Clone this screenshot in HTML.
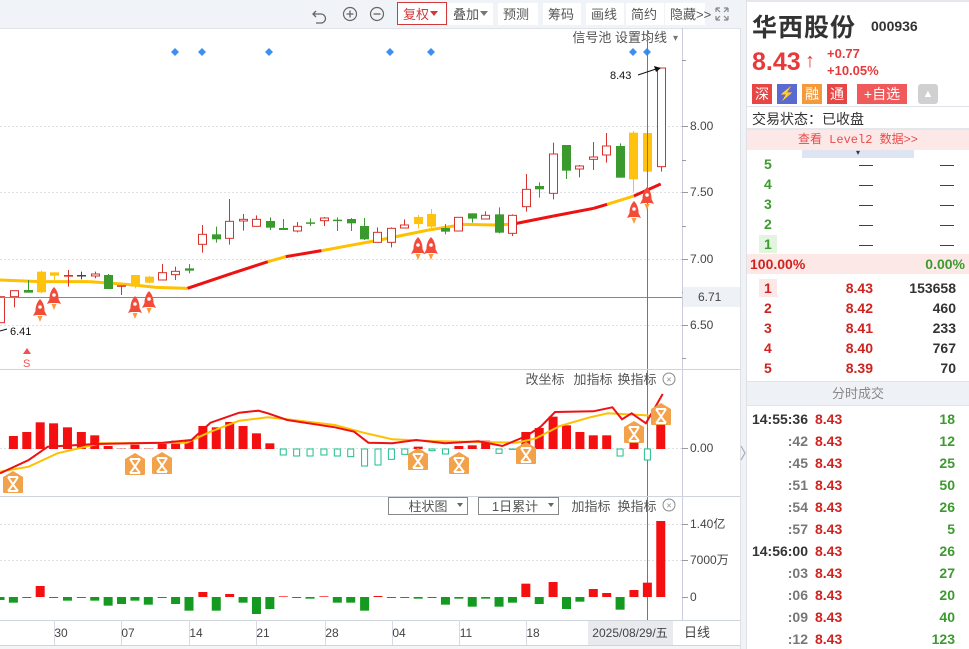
<!DOCTYPE html>
<html><head><meta charset="utf-8">
<style>
*{margin:0;padding:0;box-sizing:border-box}
body{width:969px;height:649px;overflow:hidden;background:#fff;font-family:"Liberation Sans","Noto Sans CJK SC",sans-serif;position:relative}
#chart{position:absolute;left:0;top:0}
#rp{position:absolute;left:747px;top:0;width:222px;height:649px;background:#fff;font-size:14px}
.abs{position:absolute}
.b{font-weight:bold}
.red{color:#e8393a}
.dred{color:#d0231f}
.grn{color:#3d9a2f}
.row{position:absolute;left:0;width:222px;height:20px;line-height:20px;font-weight:bold;font-size:14px}
</style></head><body>
<svg id="chart" width="747" height="649" xmlns="http://www.w3.org/2000/svg" font-family="Liberation Sans, Noto Sans CJK SC, sans-serif"></svg>

<div id="rp">
  <div class="abs" style="left:0;top:0;width:222px;height:2px;background:#e4e7ec"></div>
  <div class="abs b" style="left:5px;top:8px;font-size:25px;color:#333;letter-spacing:1px">华西股份</div>
  <div class="abs b" style="left:124px;top:18px;font-size:14px;color:#333">000936</div>
  <div class="abs b red" style="left:5px;top:48px;font-size:25px">8.43</div>
  <div class="abs b red" style="left:58px;top:50px;font-size:20px">↑</div>
  <div class="abs b red" style="left:80px;top:46px;font-size:13px">+0.77</div>
  <div class="abs b red" style="left:80px;top:63px;font-size:13px">+10.05%</div>
  <div class="abs" style="left:5px;top:84px;width:20px;height:20px;background:#e84545;color:#fff;font-size:14px;text-align:center;line-height:20px">深</div>
  <div class="abs" style="left:30px;top:84px;width:20px;height:20px;background:#5a6ad0;color:#fff;font-size:13px;text-align:center;line-height:20px">⚡</div>
  <div class="abs" style="left:55px;top:84px;width:20px;height:20px;background:#f59a3a;color:#fff;font-size:14px;text-align:center;line-height:20px">融</div>
  <div class="abs" style="left:80px;top:84px;width:20px;height:20px;background:#e84545;color:#fff;font-size:14px;text-align:center;line-height:20px">通</div>
  <div class="abs" style="left:110px;top:84px;width:50px;height:20px;background:#f15a5a;color:#fff;font-size:14px;text-align:center;line-height:20px">+自选</div>
  <div class="abs" style="left:171px;top:84px;width:20px;height:20px;background:#d0d0d0;border-radius:3px;color:#fff;font-size:11px;text-align:center;line-height:20px">▲</div>
  <div class="abs" style="left:0;top:106px;width:222px;height:1px;background:#dfe3e8"></div>
  <div class="abs" style="left:5px;top:109px;font-size:14px;color:#333">交易状态：已收盘</div>
  <div class="abs" style="left:0;top:128px;width:222px;height:2px;background:#e4e7ec"></div>
  <div class="abs" style="left:0;top:130px;width:222px;height:20px;background:#fde8e8;color:#e84a4a;font-size:12px;text-align:center;line-height:20px;font-family:'Liberation Mono','Noto Sans CJK SC',monospace">查看 Level2 数据&gt;&gt;</div>
  <div class="abs" style="left:55px;top:150px;width:112px;height:8px;background:#dde5f2;text-align:center;font-size:8px;line-height:6px;color:#333">▾</div>
  <div class="row grn" style="top:154px"><span class="abs" style="left:17px">5</span><span class="abs" style="left:112px;color:#333;font-weight:normal">—</span><span class="abs" style="left:193px;color:#333;font-weight:normal">—</span></div>
  <div class="row grn" style="top:174px"><span class="abs" style="left:17px">4</span><span class="abs" style="left:112px;color:#333;font-weight:normal">—</span><span class="abs" style="left:193px;color:#333;font-weight:normal">—</span></div>
  <div class="row grn" style="top:194px"><span class="abs" style="left:17px">3</span><span class="abs" style="left:112px;color:#333;font-weight:normal">—</span><span class="abs" style="left:193px;color:#333;font-weight:normal">—</span></div>
  <div class="row grn" style="top:214px"><span class="abs" style="left:17px">2</span><span class="abs" style="left:112px;color:#333;font-weight:normal">—</span><span class="abs" style="left:193px;color:#333;font-weight:normal">—</span></div>
  <div class="row grn" style="top:234px"><span class="abs" style="left:12px;top:1px;width:18px;height:18px;background:#e3f5e0"></span><span class="abs" style="left:17px">1</span><span class="abs" style="left:112px;color:#333;font-weight:normal">—</span><span class="abs" style="left:193px;color:#333;font-weight:normal">—</span></div>
  <div class="row" style="top:254px;background:#fde8e8;height:20px"><span class="abs dred" style="left:3px">100.00%</span><span class="abs grn" style="right:4px">0.00%</span></div>
  <div class="row dred" style="top:278px"><span class="abs" style="left:12px;top:1px;width:18px;height:18px;background:#fde8e8"></span><span class="abs" style="left:17px">1</span><span class="abs" style="right:96px">8.43</span><span class="abs" style="right:13px;color:#333">153658</span></div>
  <div class="row dred" style="top:298px"><span class="abs" style="left:17px">2</span><span class="abs" style="right:96px">8.42</span><span class="abs" style="right:13px;color:#333">460</span></div>
  <div class="row dred" style="top:318px"><span class="abs" style="left:17px">3</span><span class="abs" style="right:96px">8.41</span><span class="abs" style="right:13px;color:#333">233</span></div>
  <div class="row dred" style="top:338px"><span class="abs" style="left:17px">4</span><span class="abs" style="right:96px">8.40</span><span class="abs" style="right:13px;color:#333">767</span></div>
  <div class="row dred" style="top:358px"><span class="abs" style="left:17px">5</span><span class="abs" style="right:96px">8.39</span><span class="abs" style="right:13px;color:#333">70</span></div>
  <div class="abs" style="left:0;top:381px;width:222px;height:25px;background:#eef2f7;border-top:1px solid #e0e4ea;border-bottom:1px solid #e0e4ea;color:#888;font-size:13px;text-align:center;line-height:23px">分时成交</div>
  <div id="ticks"></div>
</div>

<script>
(function(){
var t=[["14:55:36","18"],[":42","12"],[":45","25"],[":51","50"],[":54","26"],[":57","5"],["14:56:00","26"],[":03","27"],[":06","20"],[":09","40"],[":12","123"]];
var h="";
t.forEach(function(r,i){var y=409+i*22;
h+='<div class="row" style="top:'+y+'px"><span class="abs" style="right:161px;color:'+(r[0].length>4?'#333':'#777')+'">'+r[0]+'</span><span class="abs dred" style="left:68px">8.43</span><span class="abs grn" style="right:14px">'+r[1]+'</span></div>';});
document.getElementById('ticks').innerHTML=h;

var s="";
function L(x1,y1,x2,y2,c,w,d){s+='<line x1="'+x1+'" y1="'+y1+'" x2="'+x2+'" y2="'+y2+'" stroke="'+c+'" stroke-width="'+(w||1)+'"'+(d?' stroke-dasharray="'+d+'"':'')+'/>';}
function R(x,y,w,h,f,st){s+='<rect x="'+x+'" y="'+y+'" width="'+w+'" height="'+h+'" fill="'+f+'"'+(st?' stroke="'+st+'"':'')+'/>';}
function T(x,y,tx,c,sz,anc,extra){s+='<text x="'+x+'" y="'+y+'" fill="'+(c||'#333')+'" font-size="'+(sz||12)+'"'+(anc?' text-anchor="'+anc+'"':'')+(extra||'')+'>'+tx+'</text>';}
R(0,0,745,28,"#f0f3f8");
L(0,28.5,745,28.5,"#e0e4ea");
s+='<path d="M316 11 l-3 3 l3 3 M313 14 h8 a4.5 4.5 0 0 1 0 9 h-5" fill="none" stroke="#666" stroke-width="1.3"/>';
s+='<circle cx="350" cy="14" r="6.5" fill="none" stroke="#666" stroke-width="1.2"/><path d="M346.5 14h7M350 10.5v7" stroke="#666" stroke-width="1.3"/>';
s+='<circle cx="377" cy="14" r="6.5" fill="none" stroke="#666" stroke-width="1.2"/><path d="M373.5 14h7" stroke="#666" stroke-width="1.3"/>';
R(397.5,2.5,49,22,"#fff","#d23a3a");T(403,19,"复权","#d23a3a",13);s+='<path d="M430 11h8l-4 5z" fill="#d23a3a"/>';
var bt=[[448,45,"叠加",1],[498,40,"预测"],[543,38,"筹码"],[586,38,"画线"],[626,38,"简约"],[665,40,"隐藏>>"]];
bt.forEach(function(b){R(b[0],3,b[1],22,"#fff");T(b[0]+5,19,b[2],"#555",13);if(b[3])s+='<path d="M480 11h8l-4 5z" fill="#777"/>';});
s+='<path d="M716 8h4M716 8v4M716 8l4 4M728 8h-4M728 8v4M728 8l-4 4M716 20h4M716 20v-4M716 20l4-4M728 20h-4M728 20v-4M728 20l-4-4" stroke="#888" stroke-width="1.2" fill="none"/>';
R(740,0,7,649,"#f0f2f5");L(740.5,28,740.5,649,"#dde1e6");L(746.5,0,746.5,649,"#dde1e6");
s+='<path d="M741 446l4 7-4 7" fill="none" stroke="#aab" stroke-width="1.2"/>';
L(682.5,28,682.5,620,"#ccd");
[126,192,259,325].forEach(function(y){L(0,y+0.5,682,y+0.5,"#dde0e6",1,"2,2");L(682,y+0.5,688,y+0.5,"#999");});
[60,160,226,292,358].forEach(function(y){L(682,y+0.5,686,y+0.5,"#999");});
T(690,130,"8.00","#444",12);T(690,196,"7.50","#444",12);T(690,263,"7.00","#444",12);T(690,329,"6.50","#444",12);
T(678,41,"▾","#777",10,"end");T(667,42,"信号池  设置均线","#555",13,"end");
[175,202,269,390,431,633,647].forEach(function(x){s+='<path d="M'+x+' 48l4 4-4 4-4-4z" fill="#3d8ff0"/>';});
var ma=[[0,540],[90,545],[200,545],[300,555],[350,562],[420,565],[520,520],[600,485],[640,470],[720,452],[850,420],[960,390],[1040,373],[1110,375],[1150,372],[1240,348],[1330,325],[1360,313],[1420,288],[1480,252]];
function mp(p){return [p[0]/2.24,100+p[1]/3];}
var cols=["#ffc000","#ffc000","#ffc000","#ffc000","#ffc000","#ee1111","#ee1111","#ffc000","#ee1111","#ffc000","#ffc000","#ffc000","#ffc000","#ffc000","#ee1111","#ee1111","#ee1111","#ffc000","#ee1111"];
for(var i=0;i<ma.length-1;i++){var a=mp(ma[i]),b=mp(ma[i+1]);L(a[0],a[1],b[0],b[1],cols[i],3);}
var C=[[0,590,668,590,668,'r'],[32,572,590,572,622,'r'],[62,570,578,540,578,'g'],[92,515,577,512,580,'y'],[122,517,527,517,540,'y'],[153,525,530,510,560,'R'],[181,525,528,515,538,'k'],[213,522,528,515,535,'r'],[243,525,567,522,567,'g'],[270,556,560,556,585,'R'],[302,525,560,525,565,'y'],[333,530,548,528,550,'y'],[363,518,540,492,540,'r'],[392,514,524,500,540,'r'],[423,505,512,492,520,'g'],[453,403,433,375,458,'r'],[484,403,418,380,428,'g'],[514,364,415,297,434,'r'],[545,358,363,342,392,'r'],[574,358,379,346,380,'r'],[605,363,383,352,390,'g'],[634,384,390,357,390,'g'],[665,379,393,366,397,'r'],[695,367,370,355,378,'g'],[726,354,362,351,378,'r'],[755,359,362,352,393,'g'],[786,357,370,354,393,'g'],[816,378,418,354,420,'g'],[845,397,427,382,427,'r'],[876,385,427,382,442,'r'],[906,375,384,358,385,'r'],[937,351,372,345,385,'y'],[966,342,380,327,385,'y'],[997,384,395,372,403,'g'],[1026,352,393,352,393,'r'],[1057,340,356,340,368,'g'],[1087,346,357,334,358,'r'],[1118,343,398,322,400,'g'],[1147,346,400,343,408,'r'],[1179,268,320,222,335,'r'],[1208,258,268,247,293,'g'],[1239,162,280,128,298,'r'],[1268,135,212,135,237,'g'],[1298,198,207,195,232,'r'],[1328,171,178,126,210,'r'],[1358,138,165,99,188,'r'],[1389,138,233,130,233,'g'],[1418,98,238,93,275,'y'],[1450,99,215,95,237,'y'],[1480,-96,200,-96,215,'r']];
var CC={r:"#d8322c",R:"#d8322c",g:"#3a9a2e",y:"#ffc20e",k:"#444"};
C.forEach(function(c){var x=Math.round(c[0]/2.24)+0.5,y1=100+c[1]/3,y2=100+c[2]/3,w1=100+c[3]/3,w2=100+c[4]/3,col=CC[c[5]];
L(x,w1,x,w2,col,1);var h=Math.max(1.5,y2-y1);
if(c[5]=='r')R(x-4,y1,8,h,"#fff",col);else R(x-4.5,y1,9,h,col);});
L(0,297.5,682,297.5,"#888");R(683,287,57,20,"#eef1f5");T(698,301,"6.71","#444",12);
L(647.5,30,647.5,620,"#777");
T(610,79,"8.43","#111",11);s+='<path d="M638 75 L656 69" stroke="#111"/><path d="M661 68l-7-2 2 6z" fill="#111"/>';
T(10,335,"6.41","#111",11);L(0,331,7,329,"#111");
s+='<path d="M27 348l4 6h-8z" fill="#f05050"/>';T(23,367,"S","#f05050",11);
function rocket(x,y){s+='<g transform="translate('+x+','+y+')"><path d="M0 -11 C5 -6 5 1 4 5 L-4 5 C-5 1 -5 -6 0 -11Z" fill="#f24b3a"/><path d="M-4 0 L-7 6 L-4 5Z M4 0 L7 6 L4 5Z" fill="#f24b3a"/><circle cx="0" cy="-3" r="1.8" fill="#fff"/><path d="M-2.5 6 L0 12 L2.5 6Z" fill="#ff9a3a"/></g>';}
[[40,310],[54,298],[135,307],[149,302],[418,248],[431,248],[634,212],[647,198]].forEach(function(p){rocket(p[0],p[1]);});
L(0,369.5,740,369.5,"#cfd4db");
T(545,384,"改坐标","#555",13,"middle");T(593,384,"加指标","#555",13,"middle");T(637,384,"换指标","#555",13,"middle");
s+='<circle cx="669" cy="379" r="6" fill="none" stroke="#888"/><text x="669" y="382.5" font-size="9" fill="#888" text-anchor="middle">×</text>';
L(0,448.5,682,448.5,"#dde0e6",1,"2,2");L(682,448.5,688,448.5,"#999");T(690,452,"0.00","#444",12);
var M=[[28,198],[56,186],[84,157],[112,160],[141,172],[170,186],[198,196],[226,228],[254,236],[282,224],[310,236],[339,218],[367,212],[395,210],[424,168],[452,172],[480,156],[508,168],[536,190],[564,220],[592,255,1],[620,258,1],[648,258,1],[677,255,1],[705,258,1],[733,260,1],[762,288,1],[790,285,1],[818,268,1],[846,253,1],[874,230],[903,242,1],[931,252,1],[959,228],[987,226],[1015,212],[1043,250,1],[1071,238,1],[1099,186],[1127,174],[1156,140],[1184,166],[1212,186],[1240,196],[1268,196],[1296,258,1],[1325,200],[1353,270,1],[1381,150]];
M.forEach(function(m){var x=m[0]/2.09,y=370+m[1]/3,z=449;
if(m[2])R(x-3,z,6,y-z,"#fff","#1cc08a");else R(x-4.5,y,9,z-y,"#f41010");});
function poly(pts,c){var d=pts.map(function(p,i){return (i?'L':'M')+(p[0]/2.09).toFixed(1)+' '+(370+p[1]/3).toFixed(1);}).join(' ');s+='<path d="'+d+'" fill="none" stroke="'+c+'" stroke-width="2"/>';}
poly([[0,305],[60,290],[120,250],[210,220],[390,218],[440,185],[500,152],[560,142],[600,148],[700,165],[760,188],[820,208],[900,213],[1000,216],[1080,218],[1120,205],[1170,168],[1230,143],[1270,130],[1340,135],[1385,140]],"#ffc000");
poly([[0,310],[60,270],[100,230],[200,222],[340,218],[400,210],[440,158],[500,128],[540,122],[560,130],[600,150],[700,172],[740,185],[770,218],[820,220],[870,210],[930,220],[1000,214],[1050,228],[1100,198],[1130,170],[1160,126],[1240,124],[1280,112],[1300,148],[1320,130],[1350,160],[1385,72]],"#ee1111");
function xm(x,y){s+='<g transform="translate('+x+','+y+')"><path d="M-10 -5 L0 -11 L10 -5 L10 10 Q10 11 9 11 L-9 11 Q-10 11 -10 10Z" fill="#f2a24a"/><path d="M-5 -5 Q0 3 5 9 M5 -5 Q0 3 -5 9 M-5 -5h10 M-5 9h10" stroke="#fff" stroke-width="2" fill="none"/></g>';}
[[13,482],[135,464],[162,463],[418,459],[459,463],[526,453],[634,432],[661,414]].forEach(function(p){xm(p[0],p[1]);});
L(0,496.5,740,496.5,"#cfd4db");
R(388.5,497.5,79,17,"#fff","#888");T(428,511,"柱状图","#555",13,"middle");s+='<path d="M457 503h6l-3 4z" fill="#666"/>';
R(478.5,497.5,80,17,"#fff","#888");T(515,511,"1日累计","#555",13,"middle");s+='<path d="M548 503h6l-3 4z" fill="#666"/>';
T(591,511,"加指标","#555",13,"middle");T(637,511,"换指标","#555",13,"middle");
s+='<circle cx="669" cy="505" r="6" fill="none" stroke="#888"/><text x="669" y="508.5" font-size="9" fill="#888" text-anchor="middle">×</text>';
[524,560].forEach(function(y){L(0,y+0.5,682,y+0.5,"#dde0e6",1,"2,2");L(682,y+0.5,688,y+0.5,"#999");});
L(682,597.5,688,597.5,"#999");
T(690,528,"1.40亿","#444",12);T(690,564,"7000万","#444",12);T(690,601,"0","#444",12);
var V=[[0,690],[28,698],[56,684],[84,648],[112,684],[141,692],[170,683],[198,692],[226,707],[254,702],[282,692],[310,704],[339,684],[367,702],[395,722],[424,666],[452,722],[480,672],[508,698],[536,732],[564,717],[592,679],[620,684],[648,686],[677,679],[705,698],[733,698],[762,722],[790,678],[818,684],[846,684],[874,686],[903,684],[931,704],[959,686],[987,710],[1015,686],[1043,710],[1071,698],[1099,641],[1127,702],[1156,636],[1184,717],[1212,695],[1240,657],[1268,669],[1296,719],[1325,660],[1353,638],[1381,453]];
V.forEach(function(v){var x=v[0]/2.09,y=370+v[1]/3,z=597;
if(y<z)R(x-4.5,y,9,z-y,"#f41010");else R(x-4.5,z,9,Math.max(1,y-z),"#149a20");});
L(0,620.5,740,620.5,"#cfd4db");
[[61,"30"],[128,"07"],[196,"14"],[263,"21"],[332,"28"],[399,"04"],[466,"11"],[533,"18"]].forEach(function(d){L(d[0]-6.5,620,d[0]-6.5,645,"#d8dce2");T(d[0],637,d[1],"#444",12,"middle");});
R(588,621,85,24,"#e8eaee");T(630,637,"2025/08/29/五","#444",12,"middle");
T(684,637,"日线","#444",13);
L(0,645.5,740,645.5,"#d0d4da");
R(0,646,740,3,"#f4f5f7");
document.getElementById('chart').innerHTML=s;
})();
</script>
</body></html>
